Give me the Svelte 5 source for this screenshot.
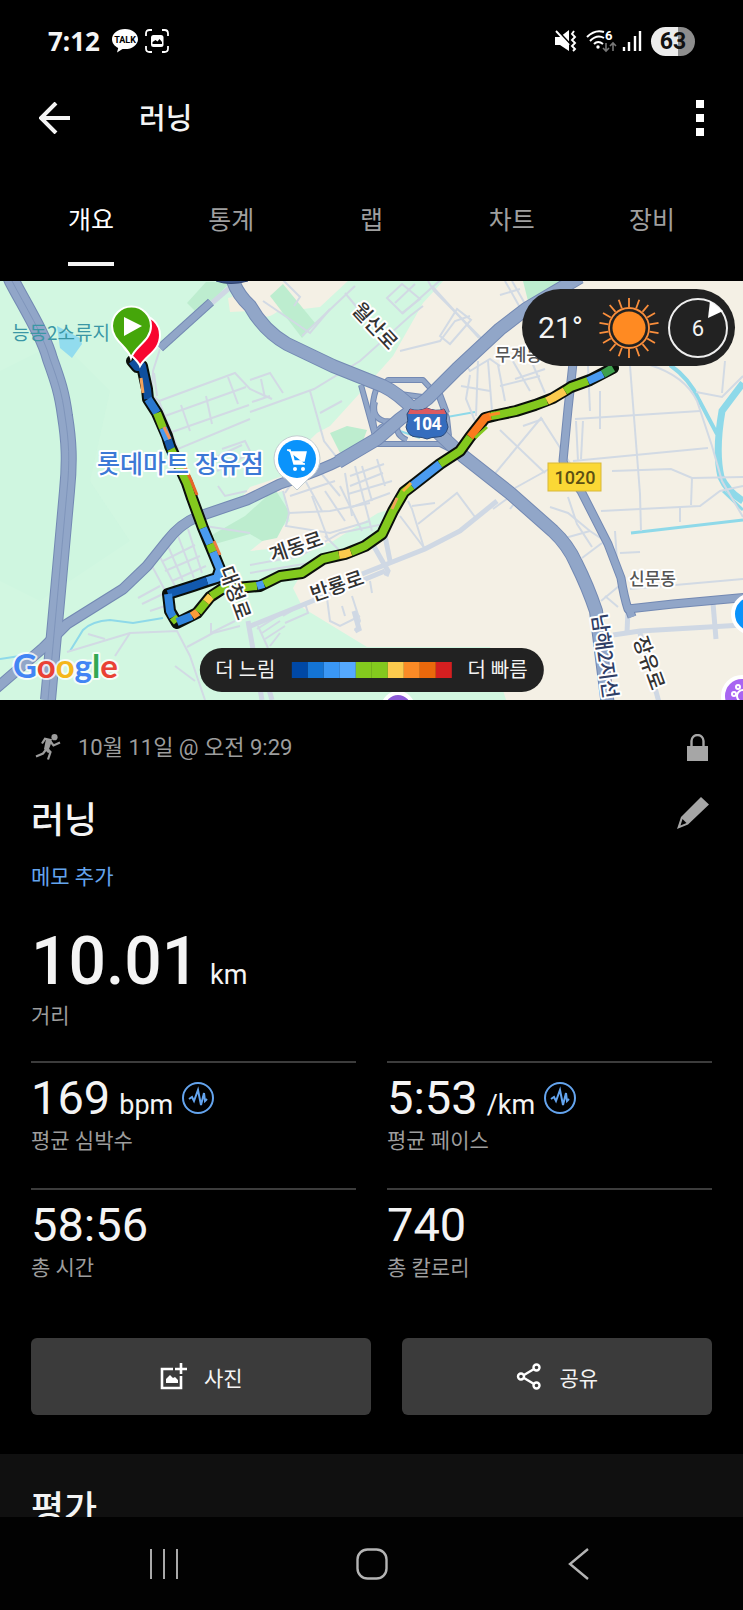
<script lang="ts">
	type Segment = { color: string; points: string };
	type Stat = { value: string; unit?: string; label: string; chart?: boolean };

	const tabs = ['개요', '통계', '랩', '차트', '장비'];
	let active = $state('개요');

	const pace = ['#0048a5', '#1474d4', '#3a97f5', '#55a9ff', '#83c91e', '#83c91e', '#fcca4d', '#fb8b26', '#ea680b', '#d41f20'];

	const stats: Stat[] = [
		{ value: '169', unit: 'bpm', label: '평균 심박수', chart: true },
		{ value: '5:53', unit: '/km', label: '평균 페이스', chart: true },
		{ value: '58:56', label: '총 시간' },
		{ value: '740', label: '총 칼로리' },
	];

	const route =
		'132,80 137,86 142,85 147,108 148,118 157,132 167,155 170,165 187,202 192,217 203,247 220,288 217,297 193,305 168,313 170,330 177,342 197,332 210,316 222,308 247,306 260,305 280,295 302,292 323,278 345,273 365,265 382,253 393,230 404,211 417,201 440,183 460,170 470,156 485,137 497,134 516,130 535,124 553,117 571,106 590,99 613,87';

	const segments: Segment[] = [
		{ color: '#0f4f9e', points: '132,80 137,86 142,85 147,108 148,118' },
		{ color: '#2b78cf', points: '148,118 157,132' },
		{ color: '#83c91e', points: '157,132 163,147' },
		{ color: '#4a9bf0', points: '163,147 168,159' },
		{ color: '#175cae', points: '168,159 171,168' },
		{ color: '#83c91e', points: '171,168 187,202 192,217 203,247' },
		{ color: '#4a9bf0', points: '203,247 210,263' },
		{ color: '#83c91e', points: '210,263 213,271' },
		{ color: '#4a9bf0', points: '213,271 220,288 217,297 207,300' },
		{ color: '#1259ae', points: '207,300 193,305 168,313' },
		{ color: '#2f83dc', points: '168,313 170,330 173,336' },
		{ color: '#83c91e', points: '173,336 177,341' },
		{ color: '#2f83dc', points: '177,341 192,335' },
		{ color: '#fb9a3a', points: '192,335 198,331' },
		{ color: '#83c91e', points: '198,331 206,321' },
		{ color: '#fcca4d', points: '206,321 211,315' },
		{ color: '#83c91e', points: '211,315 222,308 247,306 257,305' },
		{ color: '#4a9bf0', points: '257,305 264,303' },
		{ color: '#83c91e', points: '264,303 280,295 302,292 323,278 339,274' },
		{ color: '#fcca4d', points: '339,274 345,273 351,271' },
		{ color: '#83c91e', points: '351,271 365,265 382,253 393,230 404,211 412,205' },
		{ color: '#4a9bf0', points: '412,205 440,183' },
		{ color: '#83c91e', points: '440,183 460,170 470,156' },
		{ color: '#fb7a1e', points: '470,156 485,137 491,135' },
		{ color: '#83c91e', points: '491,135 497,134 516,130 535,124 547,120' },
		{ color: '#fcca4d', points: '547,120 553,117 565,110' },
		{ color: '#83c91e', points: '565,110 571,106 588,100' },
		{ color: '#4a9bf0', points: '588,100 603,93' },
		{ color: '#3da04d', points: '603,93 613,87' },
	];

	// slivers of the return leg that show beside the outbound one
	const returnLeg: Segment[] = [
		{ color: '#f3a35b', points: '141,97 143,112' },
		{ color: '#f3935b', points: '164,146 170,158' },
		{ color: '#e8642a', points: '182,180 191,199 197,214' },
		{ color: '#ef7b45', points: '214,260 220,274' },
		{ color: '#f3a35b', points: '392,228 397,217' },
		{ color: '#fcb13f', points: '403,210 411,202' },
		{ color: '#83c91e', points: '475,157 487,146' },
		{ color: '#fb8b26', points: '489,134 500,132' },
	];

	const highways = [
		{ width: 14, d: 'M6,-14 L12,0 C25,25 44,55 50,78 C58,100 62,112 65,135 C69,160 70,180 67,210 L58,310 L48,419' },
		{ width: 9, d: 'M-6,409 L0,404 L43,367 L67,343 L123,308 L147,285 L167,260 Q180,243 197,236 L247,219 L280,203 Q320,190 345,177' },
		{ width: 12, d: 'M338,181 L377,158 L400,138 L427,118 L457,88 L500,48 L526,28 L580,-4' },
		{ width: 12, d: 'M228,-20 L233,0 Q238,14 250,25 Q264,50 287,63 L333,85 L383,105 Q398,112 415,130 L463,175 L510,212 L553,250 Q568,264 576,282 Q588,306 596,330 L608,425' },
	];

	const trunks = [
		'M578,60 L573,82 L568,128 L563,180 Q566,190 581,210 L608,263 L621,297 Q624,316 628,328 L673,323 L750,316',
		'M628,325 L632,336',
		'M160,67 L211,21',
	];

	const ramps = [
		'M361,104 L375,155 L375,163 L440,163 L458,172',
		'M378,104 Q369,123 375,150',
		'M383,108 L388,99 L423,99 L433,110',
		'M393,107 L400,113 L430,117',
		'M450,98 L438,113 L447,137 L449,155',
		'M375,121 Q371,136 384,140 L397,141',
		'M376,151 Q388,138 401,141',
		'M399,135 Q392,153 407,159',
		'M437,105 L447,132',
	];

	const streets = [
		'M153,115 L159,120 L235,92 L250,108 L272,118',
		'M159,120 L178,168 L250,138', 'M165,135 L246,106', 'M172,151 L249,124', 'M181,124 L190,150', 'M206,115 L212,143', 'M228,96 L238,123',
		'M152,115 L153,90 L160,68', 'M157,115 L154,92',
		'M250,99 L270,92 L283,112', 'M261,98 L265,117', 'M270,115 L252,121',
		'M250,131 L314,108 L360,80 L410,35 L423,25', 'M310,110 L324,160 L338,178',
		'M320,132 L342,120', 'M222,168 L245,160 L250,170', 'M217,190 L247,174', 'M212,178 L242,164',
		'M302,55 L355,5', 'M345,12 L370,42', 'M330,28 L310,52 L263,20', 'M283,-1 L300,16 L294,25',
		'M387,17 L402,3 L420,18 L402,32 Z', 'M395,22 L415,3', 'M402,33 L445,-5', 'M400,70 L440,60 L455,40 L470,35',
		'M440,55 L450,63 L471,39 L457,28 Z', 'M432,5 L479,57', 'M428,0 L434,10 L482,58',
		'M462,78 L470,90 L490,78 L500,85', 'M470,94 L466,118 L475,140', 'M478,80 L476,135', 'M461,105 L490,110', 'M488,80 L492,130',
		'M498,84 L505,120', 'M510,75 L530,110', 'M515,98 L545,88', 'M500,105 L540,95', 'M525,65 L545,112',
		'M505,0 L522,30', 'M512,0 L528,28', 'M500,14 L520,8',
		'M493,195 L541,137 L575,190', 'M500,149 L545,192', 'M543,138 L523,145', 'M515,207 L560,182',
		'M575,138 L700,130', 'M573,180 L708,167', 'M630,85 L640,213', 'M612,190 L671,188 L692,197 L743,196', 'M650,84 Q685,95 697,120 L712,165 L722,200 L743,236',
		'M696,111 L722,116 L743,95', 'M725,80 L722,112', 'M692,197 L691,224', 'M576,140 L578,180', 'M583,140 L581,178', 'M588,85 L590,130', 'M600,110 L600,148',
		'M601,230 L700,225 L720,210 L743,205', 'M680,225 L680,241', 'M640,213 L641,250', 'M615,250 L617,280', 'M620,272 L640,271',
		'M550,226 L568,232 L590,250 L602,258', 'M568,216 L577,243 L592,266', 'M565,257 L590,250', 'M582,277 L602,262', 'M630,308 L743,298',
		'M601,320 L625,300', 'M605,315 L618,326', 'M493,228 L515,212', 'M520,215 L510,228',
		'M283,210 L289,232 L330,230 L370,222', 'M289,232 L286,245 L330,252 L370,240', 'M290,215 L335,200', 'M325,210 L345,240', 'M340,205 L362,250', 'M312,215 L328,258',
		'M345,192 L352,235', 'M348,213 L392,200', 'M352,226 L390,212', 'M355,185 L372,250',
		'M350,195 L384,183', 'M350,205 L383,192', 'M362,185 L372,220', 'M377,178 L385,205', 'M300,190 L322,230', 'M315,185 L340,215', 'M285,212 L298,193',
		'M250,284 L300,275 L340,252 L384,243', 'M250,292 L310,282', 'M325,255 L340,270',
		'M378,272 L387,288', 'M400,235 L425,268', 'M408,220 L412,228 L424,267', 'M418,243 L457,212 L475,236', 'M412,225 L435,222',
		'M325,302 L330,340 L340,345 L360,335', 'M352,315 L360,340 L355,350', 'M342,325 L345,335', 'M370,300 L372,312',
		'M257,348 L283,332 L310,322', 'M262,352 L280,340', 'M265,358 L285,345', 'M270,365 L280,352', 'M258,345 L268,367', 'M283,335 L305,322 L308,332 L285,342',
		'M152,285 L168,315', 'M158,272 L175,305', 'M168,265 L183,300', 'M178,255 L194,297', 'M188,248 L202,292', 'M163,280 L195,264', 'M165,290 L200,275', 'M172,300 L206,285',
		'M138,317 L160,305', 'M142,323 L165,312', 'M150,330 L165,325',
		'M67,371 L130,352 L177,350 L190,375 L205,419', 'M130,352 L115,375', 'M187,366 L213,352 L240,345', 'M211,342 L211,352 L235,340', 'M175,385 L195,400', 'M88,353 L105,358',
		'M205,245 L250,252', 'M218,205 L225,215 L247,210',
	];

	const avenues = [
		'M362,293 L425,268 L460,250 L497,220',
		'M248,346 L300,325 L385,290',
		'M372,262 L388,290 L386,295',
		'M354,330 L359,348 L355,350',
		'M613,354 L640,350 L743,344',
		'M713,322 L716,358',
		'M628,328 L627,352',
		'M248,340 L262,419',
		'M640,352 L660,425',
		'M268,405 L272,419',
		'M212,22 L234,3',
		'M383,245 L390,280',
	];
</script>

{#snippet chartIcon()}
	<svg class="chart-icon" viewBox="0 0 32 32" aria-hidden="true">
		<circle cx="16" cy="16" r="15" />
		<path d="M7 17l3-2 2 4 4-11 3 15 3-12 1 8 2-2" />
	</svg>
{/snippet}

<div class="app">
	<div class="status">
		<span class="clock">7:12</span>
		<svg class="talk" viewBox="0 0 26 24" aria-hidden="true">
			<path d="M13 0C5.800 0 0 4.600 0 10.200c0 3.700 2.500 6.900 6.200 8.700L5 23.500l5.500-3.600c.8.100 1.700.200 2.500.2 7.200 0 13-4.400 13-9.900S20.200 0 13 0z" fill="#fff" />
			<text x="13" y="14" text-anchor="middle">TALK</text>
		</svg>
		<svg class="capture" viewBox="0 0 24 24" aria-hidden="true">
			<path d="M1 7V4.500Q1 1 4.500 1H7M17 1h2.500Q23 1 23 4.500V7M23 17v2.500q0 3.500-3.500 3.500H17M7 23H4.500Q1 23 1 19.500V17" fill="none" stroke="#fff" stroke-width="1.800" />
			<rect x="6" y="6" width="12.500" height="12" rx="2.500" fill="#fff" />
			<path d="M7.500 15v-2l3-2 2 1.500 2-2.500 2.500 3v2z" fill="#000" />
		</svg>
		<span class="spacer"></span>
		<svg class="mute" viewBox="0 0 22 22" aria-hidden="true">
			<path d="M0 7h5l9-7v21l-9-6H0z" fill="#fff" />
			<path d="M1 -1l14 15" stroke="#000" stroke-width="2" />
			<path d="M1 1l13 14M19 1l-2 3 3 3-3 3 3 3-3 3 3 3-2 2" fill="none" stroke="#fff" stroke-width="1.900" />
		</svg>
		<svg class="wifi" viewBox="0 0 31 23" aria-hidden="true">
			<g fill="none" stroke="#fff" stroke-width="2">
				<path d="M1 7Q9-1 18 2M4 11Q11 4 18 8M8 14q4-4 9 0" />
			</g>
			<circle cx="12" cy="17" r="1.700" fill="#fff" />
			<text x="19" y="10">6</text>
			<path d="M20 13v8m-3-3l3 3 3-3M27 21v-8m-3 3l3-3 3 3" fill="none" stroke="#777" stroke-width="1.600" />
		</svg>
		<svg class="signal" viewBox="0 0 20 20" aria-hidden="true">
			<path d="M2 16v4M7 11v9M13 5v15M18 0v20" stroke="#fff" stroke-width="2.400" />
		</svg>
		<span class="battery">63</span>
	</div>

	<header>
		<button class="icon-btn" aria-label="뒤로">
			<svg width="32" height="32" viewBox="0 0 32 32"><path d="M17 1L2 16l15 15M2 16h29" fill="none" stroke="#f4f4f4" stroke-width="4" /></svg>
		</button>
		<h1>러닝</h1>
		<button class="icon-btn more" aria-label="더보기">
			<svg width="8" height="36" viewBox="0 0 8 36"><path d="M0 0h8v8H0zM0 14h8v8H0zM0 28h8v8H0z" fill="#fff" /></svg>
		</button>
	</header>

	<nav class="tabs">
		{#each tabs as tab}
			<button onclick={() => (active = tab)}>
				<span class:active={active === tab}>{tab}</span>
			</button>
		{/each}
	</nav>

	<main>
		<div class="map">
			<svg class="map-art" viewBox="0 0 743 419" role="img" aria-label="러닝 경로 지도">
				<rect width="743" height="419" fill="#f4f0e5" />
				<path d="M0 0H228L236 28 250 28Q262 42 277 31L320 26 350 -2H445L423 22 393 75 360 112 330 145 317 152 290 178 283 195 250 206 235 225 283 210 290 240 260 262 250 270 330 262 378 232 392 228 380 256 302 292 293 307 303 327 367 366H490L506 419H0z" fill="#d2f7e1" />
				<path d="M0 90L60 60 110 110 90 200 130 260 40 320 0 300z" fill="#cdf5df" opacity="0.7" />
				<path d="M228 17l12-3 10 16-20 1z" fill="#f4efe0" />
				<g fill="#bdedcf">
					<path d="M187 22L206 1H230L200 35z" />
					<path d="M270 15L283 3 315 42 302 57z" />
					<path d="M330 152L347 145 367 149 360 168 340 172z" />
					<path d="M205 258L245 235 275 208 290 232 277 257 262 260 250 253 208 265z" />
					<path d="M523 0h40l-35 20z" />
				</g>
				<path d="M57 45L80 57 82 63 72 77 60 67z" fill="#92dcee" />
				<g fill="none" stroke="#8ed9e9">
					<path d="M163 337L133 342 110 339Q92 340 83 349L70 370M20 375L0 378" stroke-width="2" />
					<path d="M743 102L722 130Q715 170 721 196 727 210 743 220" stroke-width="7" />
					<path d="M670 84Q690 98 699 119L717 153" stroke-width="4" />
					<path d="M631 252L743 239M723 210L743 229" stroke-width="3" />
					<path d="M400 150L420 157M447 136L475 131" stroke-width="2" />
				</g>
				<g fill="none" stroke="#d2dae4" stroke-width="2">
					{#each streets as d}<path {d} />{/each}
				</g>
				<g fill="none" stroke="#cfd8e4" stroke-width="5">
					{#each avenues as d}<path {d} />{/each}
				</g>
				<g fill="none" stroke-linejoin="round">
					{#each ramps as d}<path {d} stroke="#7389b3" stroke-width="6" />{/each}
					{#each ramps as d}<path {d} stroke="#91a6c8" stroke-width="4" />{/each}
					{#each trunks as d}<path {d} stroke="#7389b3" stroke-width="9" />{/each}
					{#each trunks as d}<path {d} stroke="#91a6c8" stroke-width="7" />{/each}
					{#each highways as h}<path d={h.d} stroke="#7389b3" stroke-width={h.width + 2} />{/each}
					{#each highways as h}<path d={h.d} stroke="#91a6c8" stroke-width={h.width} />{/each}
					<path d={highways[0].d} stroke="#7f95bb" stroke-width="1" />
				</g>
				<path d="M216 0q14 5 32 0" fill="#3d5487" stroke="#2e416e" />

				<g fill="none" stroke-linejoin="round">
					<polyline points={route} stroke="#0a0f0a" stroke-width="12" stroke-linecap="round" />
					{#each segments as s}<polyline points={s.points} stroke={s.color} stroke-width="8" />{/each}
					{#each returnLeg as s}<polyline points={s.points} stroke={s.color} stroke-width="3" />{/each}
				</g>

				<g class="halo">
					<text x="12" y="59" font-size="19" fill="#3b97a5" class="thin">능동2소류지</text>
					<text x="97" y="192" font-size="25" fill="#3c79d6">롯데마트 장유점</text>
					<text x="495" y="80" font-size="17" fill="#555">무계동</text>
					<text x="629" y="304" font-size="17" fill="#555">신문동</text>
					<g text-anchor="middle" font-size="20" fill="#333">
						<text transform="translate(375 45) rotate(47)" y="7">월산로</text>
						<text transform="translate(296 266) rotate(-19)" y="7">계동로</text>
						<text transform="translate(337 305) rotate(-19)" y="7">반룡로</text>
						<text transform="translate(235 312) rotate(70)" y="7">대청로</text>
						<text transform="translate(649 382) rotate(70)" y="7">장유로</text>
					</g>
					<text transform="translate(599 333) rotate(82)" y="7" font-size="20" fill="#2f3e66">남해2지선</text>
				</g>

				<path d="M140 85C137 76 120 70 120 54A19 19 0 0 1 160 54C160 70 146 74 140 85z" fill="#f8062f" stroke="#fff" stroke-width="2" />
				<path d="M131 77C128 65 112 60 112 45A19 19 0 0 1 151 45C151 60 135 65 131 77z" fill="#45a60a" stroke="#fff" stroke-width="2" />
				<path d="M124 36L142 45 124 55z" fill="#fff" />

				<path d="M297 209L286 198A23 23 0 1 1 308 198z" fill="#fff" stroke="#c3cdd0" />
				<circle cx="297" cy="178" r="19" fill="#0a93fb" />
				<path d="M287 169h3l4 14h11M292 171h14l-2 9H294z" fill="#fff" stroke="#fff" stroke-width="1.500" />
				<circle cx="295" cy="188" r="2" fill="#fff" /><circle cx="303" cy="188" r="2" fill="#fff" />

				<path d="M410 128q8 3 17-1 9 4 17 1l3 5q-2 6 1 13-2 10-11 10-5 0-10 2-5-2-10-2-9 0-11-10 3-7 1-13z" fill="#356dbe" stroke="#2a4a7a" />
				<path d="M410 128q8 3 17-1 9 4 17 1l2 5H408z" fill="#dc5a60" />
				<text x="427" y="149" class="shield">104</text>
				<rect x="548" y="182" width="53" height="28" fill="#fbd835" stroke="#d8b83a" />
				<text x="575" y="203" class="road-no">1020</text>

				<g stroke="#fff" stroke-width="4">
					<circle cx="752" cy="333" r="19" fill="#0a93fb" />
					<circle cx="742" cy="415" r="19" fill="#a865f2" />
					<circle cx="398" cy="427" r="15" fill="#8e5bd8" />
				</g>
				<g fill="none" stroke="#fff" stroke-width="2">
					<circle cx="743" cy="415" r="6" /><circle cx="738" cy="406" r="2" /><circle cx="734" cy="413" r="2" />
				</g>

				<text x="13" y="397" class="google"><tspan fill="#4285f4">G</tspan><tspan fill="#e94235">o</tspan><tspan fill="#f5b71a">o</tspan><tspan fill="#4285f4">g</tspan><tspan fill="#34a853">l</tspan><tspan fill="#e94235">e</tspan></text>
			</svg>

			<div class="weather">
				<span class="temp">21°</span>
				<svg width="60" height="60" viewBox="-30 -30 60 60" aria-hidden="true">
					<circle r="16.500" fill="#ff8a22" />
					<g fill="none" stroke="#fb8f3c" stroke-width="1.800">
						<circle r="20" />
						{#each Array(18) as _, i}
							<path d="M0 -21V-30" transform="rotate({i * 20})" />
						{/each}
					</g>
				</svg>
				<svg width="62" height="62" viewBox="-31 -31 62 62" aria-hidden="true">
					<circle r="29" fill="none" stroke="#eee" stroke-width="2" />
					<path d="M12 -27L25 -17 10 -10z" fill="#fff" />
					<text y="8" class="wind">6</text>
				</svg>
			</div>

			<div class="legend">
				<span>더 느림</span>
				<div class="scale">
					{#each pace as color}<i style="background: {color}"></i>{/each}
				</div>
				<span>더 빠름</span>
			</div>
		</div>

		<section class="summary">
			<div class="meta">
				<svg width="26" height="27" viewBox="0 0 26 27" aria-hidden="true">
					<circle cx="19.500" cy="3.200" r="3.100" fill="#9d9d9d" />
					<path d="M7 9.500L10 4.800 15.500 6 11.500 14 15.500 18 13 25.500M11.500 15L8 19.500 1 22.500M15.500 7.500L18.500 11.500 25 8.500" fill="none" stroke="#9d9d9d" stroke-width="2.200" />
					<path d="M11 5l6 2-3 8 2 3-3 1-4-4z" fill="#9d9d9d" />
				</svg>
				<time>10월 11일 @ 오전 9:29</time>
				<svg width="21" height="27" viewBox="0 0 21 27" aria-hidden="true">
					<path d="M0 12h21v15H0z" fill="#a6a6a6" />
					<path d="M4.500 13V7a6 6 0 0 1 12 0v6" fill="none" stroke="#a6a6a6" stroke-width="2.400" />
				</svg>
			</div>
			<div class="title-row">
				<h2>러닝</h2>
				<button class="icon-btn" aria-label="편집">
					<svg width="32" height="32" viewBox="0 0 32 32"><path d="M24 0l8 7.500-21 20L0 32l4-12zM5.500 22L3.500 28.500 9.500 26z" fill="#a6a6a6" fill-rule="evenodd" /></svg>
				</button>
			</div>
			<a class="memo" href="#memo">메모 추가</a>

			<div class="distance"><strong>10.01</strong> <span>km</span></div>
			<div class="label">거리</div>

			<div class="stats">
				{#each stats as s}
					<div class="stat">
						<div class="value">
							<b>{s.value}</b>
							{#if s.unit}<span>{s.unit}</span>{/if}
							{#if s.chart}{@render chartIcon()}{/if}
						</div>
						<div class="label">{s.label}</div>
					</div>
				{/each}
			</div>

			<div class="actions">
				<button class="photo">
					<svg width="27" height="27" viewBox="0 0 27 27" aria-hidden="true">
						<path d="M13 6H2v19h19V13M21 0v11M15 6h12" fill="none" stroke="#fff" stroke-width="2.600" />
						<path d="M6 20v-4l4-4 3 3 2-1 3 3v3z" fill="#fff" />
					</svg>
					사진
				</button>
				<button class="share">
					<svg width="26" height="27" viewBox="0 0 26 27" aria-hidden="true">
						<g fill="none" stroke="#fff" stroke-width="2.400">
							<circle cx="5" cy="13.500" r="3" /><circle cx="20.500" cy="4.500" r="3" /><circle cx="20.500" cy="22.500" r="3" />
							<path d="M8 12l10-6M8 15l10 6" />
						</g>
					</svg>
					공유
				</button>
			</div>
		</section>

		<section class="rating">
			<h2>평가</h2>
		</section>
	</main>

	<footer>
		<button aria-label="최근 앱">
			<svg width="28" height="30" viewBox="0 0 28 30"><path d="M1 0v30M14 0v30M27 0v30" stroke="#aaa" stroke-width="2" /></svg>
		</button>
		<button aria-label="홈">
			<svg width="32" height="32" viewBox="0 0 32 32"><rect x="1.500" y="1.500" width="29" height="29" rx="10" fill="none" stroke="#b4b4b4" stroke-width="2.400" /></svg>
		</button>
		<button aria-label="뒤로">
			<svg width="22" height="32" viewBox="0 0 22 32"><path d="M20 1L2 16l18 15" fill="none" stroke="#b4b4b4" stroke-width="2.400" /></svg>
		</button>
	</footer>
</div>

<style>
	:global(body) {
		background: #000;
	}
	.app {
		display: flex;
		flex-direction: column;
		height: 100vh;
		background: #000;
		color: #f4f4f4;
		font-family: Roboto, 'Noto Sans CJK KR', sans-serif;
	}
	svg {
		display: block;
		flex: none;
	}
	button {
		padding: 0;
		border: 0;
		background: none;
		color: inherit;
		font: inherit;
		cursor: pointer;
	}
	h1, h2 {
		margin: 0;
		font-weight: 500;
	}

	.status {
		display: flex;
		align-items: center;
		height: 82px;
		padding: 0 48px;
		flex: none;
	}
	.clock {
		margin-right: 12px;
		font: 700 26px/40px 'Noto Sans', sans-serif;
	}
	.talk {
		width: 26px;
		height: 24px;
		margin-right: 7px;
	}
	.talk text {
		font: 700 9px Roboto, sans-serif;
	}
	.capture {
		width: 24px;
		height: 24px;
	}
	.spacer {
		flex: 1;
	}
	.mute {
		width: 22px;
		height: 22px;
		margin-right: 9px;
	}
	.wifi {
		width: 31px;
		height: 23px;
		margin-right: 5px;
	}
	.wifi text {
		font: 700 13px Roboto, sans-serif;
		fill: #fff;
	}
	.signal {
		width: 20px;
		height: 20px;
		margin-right: 9px;
	}
	.battery {
		width: 44px;
		border-radius: 15px;
		background: linear-gradient(90deg, #ececec 62%, #8d8d8d 62%);
		color: #111;
		font: 700 23px/29px Roboto, sans-serif;
		text-align: center;
	}

	header {
		display: flex;
		align-items: center;
		height: 72px;
		padding: 0 39px;
		flex: none;
	}
	h1 {
		flex: 1;
		margin-left: 68px;
		padding-top: 2px;
		font-size: 29px;
		line-height: 40px;
	}

	.tabs {
		display: flex;
		padding: 0 21px 15px;
		flex: none;
	}
	.tabs button {
		flex: 1;
		color: #9f9f9f;
		font-size: 25px;
		line-height: 38px;
	}
	.tabs span {
		display: inline-block;
		padding: 48px 0 22px;
		border-bottom: 4px solid transparent;
	}
	.tabs .active {
		border-color: #f4f4f4;
		color: #fff;
	}

	main {
		flex: 1;
		min-height: 0;
		overflow-y: auto;
		scrollbar-width: none;
	}
	.map {
		position: relative;
	}
	.map-art {
		width: 100%;
		height: auto;
	}
	.halo text {
		font-family: 'Noto Sans CJK KR', sans-serif;
		font-weight: 500;
		stroke: #fff;
		stroke-width: 4px;
		stroke-linejoin: round;
		paint-order: stroke;
	}
	.halo .thin {
		font-weight: 400;
		stroke: none;
	}
	.shield {
		font: 700 17px 'Noto Sans', sans-serif;
		fill: #fff;
		text-anchor: middle;
	}
	.road-no {
		font: 500 18px Roboto, sans-serif;
		fill: #5c5013;
		text-anchor: middle;
	}
	.google {
		font: 700 33px Lato, sans-serif;
		stroke: #fff;
		stroke-width: 4px;
		stroke-linejoin: round;
		stroke-opacity: 0.8;
		paint-order: stroke;
	}
	.weather {
		position: absolute;
		top: 8px;
		right: 8px;
		display: flex;
		align-items: center;
		gap: 8px;
		height: 77px;
		padding: 0 6px 0 16px;
		border-radius: 39px;
		background: #222;
	}
	.temp {
		margin-right: 8px;
		font-size: 30px;
		line-height: 40px;
	}
	.wind {
		font: 22px Roboto, sans-serif;
		fill: #f4f4f4;
		text-anchor: middle;
	}
	.legend {
		position: absolute;
		bottom: 8px;
		left: 50%;
		transform: translateX(-50%);
		display: flex;
		align-items: center;
		gap: 16px;
		height: 44px;
		padding: 0 16px;
		border-radius: 22px;
		background: #222;
		font-size: 20px;
		line-height: 30px;
		white-space: nowrap;
	}
	.scale {
		display: flex;
	}
	.scale i {
		width: 16px;
		height: 16px;
	}

	.summary {
		padding: 28px 31px 39px;
	}
	.meta {
		display: flex;
		align-items: center;
		height: 38px;
		padding: 0 4px;
		color: #9d9d9d;
		font-size: 22px;
		line-height: 38px;
	}
	.meta time {
		flex: 1;
		margin-left: 17px;
		padding-top: 2px;
	}
	.title-row {
		display: flex;
		align-items: center;
		justify-content: space-between;
		margin-top: 31px;
		padding-right: 3px;
	}
	h2 {
		font-size: 36px;
		line-height: 48px;
	}
	.title-row .icon-btn {
		align-self: flex-start;
	}
	.memo {
		display: block;
		width: fit-content;
		margin-top: 15px;
		color: #64a4ee;
		font-size: 21px;
		line-height: 34px;
		text-decoration: none;
	}
	.distance {
		margin-top: 31px;
		font-size: 27px;
		line-height: 34px;
	}
	.distance strong {
		margin-right: 4px;
		font-size: 66px;
		font-weight: 500;
		line-height: 74px;
	}
	.label {
		color: #9d9d9d;
		font-size: 21px;
		line-height: 34px;
	}
	.stats {
		display: grid;
		grid-template-columns: 1fr 1fr;
		column-gap: 31px;
		margin-top: 28px;
	}
	.stat {
		height: 125px;
		border-top: 2px solid #3c3c3c;
	}
	.value {
		display: flex;
		align-items: baseline;
		gap: 9px;
		height: 61px;
		font-size: 27px;
		line-height: 70px;
	}
	.value b {
		font-size: 47px;
		font-weight: 400;
	}
	.chart-icon {
		width: 32px;
		height: 32px;
	}
	.chart-icon circle, .chart-icon path {
		fill: none;
		stroke: #64a4ee;
		stroke-width: 2px;
	}
	.actions {
		display: flex;
		gap: 31px;
		margin-top: 23px;
	}
	.actions button {
		display: flex;
		align-items: center;
		justify-content: center;
		gap: 17px;
		height: 77px;
		border-radius: 6px;
		background: #3b3b3b;
		font-size: 21px;
	}
	.photo {
		flex: 11;
	}
	.share {
		flex: 10;
	}

	.rating {
		padding: 32px 31px;
		background: #101010;
	}

	footer {
		display: flex;
		align-items: center;
		justify-content: space-between;
		height: 93px;
		padding: 0 148px;
		background: #020202;
		flex: none;
	}
	footer button {
		display: flex;
		justify-content: center;
		width: 32px;
	}
</style>
